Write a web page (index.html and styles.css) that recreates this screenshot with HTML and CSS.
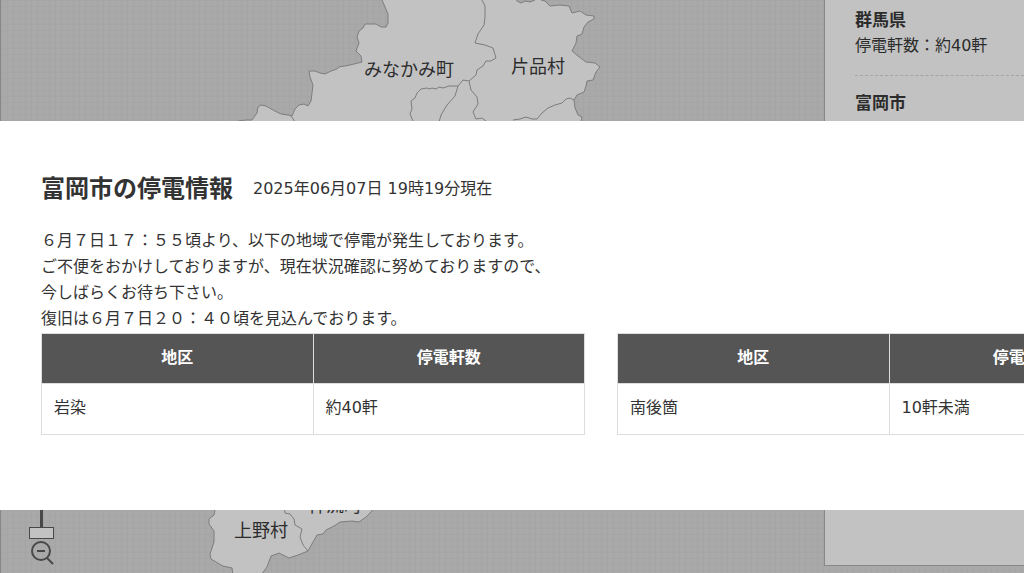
FILE: index.html
```
<!DOCTYPE html>
<html lang="ja">
  <head>
    <meta charset="UTF-8" />
    <meta name="viewport" content="width=device-width, initial-scale=1.0" />
    <title>富岡市の停電情報</title>
    <link rel="stylesheet" href="styles.css">
  </head>
  <body>
    <div class="page">
      <main class="map">
        <svg class="map-canvas" width="824" height="573" viewBox="0 0 824 573" role="img" aria-label="群馬県の地図">
          <g class="area">
            <path d="M238 121L246 120L252 120L257 113L258 107L261 105L266 106L273 110L281 114L288 115L292 116L295 109L299 105L304 104L308 106L311 101L312 93L313 85L310 77L309 71L315 71L320 73L325 74L331 71L337 69L339 67L350 65L362 62L361 56L356 51L359 43L357 37L359 31L363 28L365 24L376 24L381 27L386 27L388 23L388 14L385 7L382 0V-4H514L517 1L521 3L525 1L530 2L535 0V-4H541V0L545 1L550 6L560 5L569 6L572 13L580 11L586 15L594 16L594 19L588 22L584 27L582 34L577 36L576 43L572 51L578 56L586 62L595 63L600 67L596 72L593 80L587 81L586 86L584 92L577 95L574 100L575 108L578 115L582 117L580 125L238 125Z" />
            <path d="M216 505L214 515L209 519L209 524L214 531L214 542L210 554L211 559L216 562L223 566L232 568L233 575H261L267 567L271 556L279 553L289 558L298 555L308 551L313 542L317 535L323 534L326 530L334 526L340 522L352 521L359 522L366 517L371 512L375 505Z" />
          </g>
          <g class="border">
            <path d="M482 0L485 6L485 17L484 25L478 34L475 43L485 45L493 48L496 58L491 61L486 61L483 66L477 70L476 75L469 81L463 80L458 86L449 86L443 88L439 87L436 89L432 88L429 89L427 88L421 89L417 93L415 98L411 101L412 109L410 114L413 121" />
            <path d="M458 86L455 96L447 105L441 115L439 122" />
            <path d="M469 81L471 90L477 97L478 104L473 112L476 119L482 118L486 121" />
            <path d="M513 120L520 119L526 117L532 119L537 119L542 113L548 108L555 105L562 103L566 99L570 98L574 100" />
            <path d="M291 116L296 123" />
            <path d="M284 505L285 513L290 514L294 519L295 525L302 529L300 537L303 545L308 551" />
          </g>
          <g class="place">
            <text x="364" y="76">みなかみ町</text>
            <text x="511" y="73">片品村</text>
            <text x="234" y="537">上野村</text>
            <text x="308" y="512">神流町</text>
          </g>
          <g class="zoom-control">
            <path d="M41.5 500V527" />
            <rect x="29.5" y="527.5" width="24" height="11" />
            <circle cx="41" cy="551" r="9" />
            <path class="zoom-minus" d="M37 551H45" />
            <path class="zoom-minus" d="M47 558L53 564" />
          </g>
        </svg>
      </main>
      <aside class="summary">
        <section class="summary-item">
          <h2 class="summary-name">群馬県</h2>
          <p>停電軒数：約40軒</p>
        </section>
        <section class="summary-item">
          <h2 class="summary-name">富岡市</h2>
        </section>
      </aside>
    </div>

    <div class="modal" role="dialog" aria-labelledby="modal-title">
      <header class="modal-header">
        <h1 class="modal-title" id="modal-title">富岡市の停電情報</h1>
        <p>2025年06月07日 19時19分現在</p>
      </header>
      <p class="modal-message">
        ６月７日１７：５５頃より、以下の地域で停電が発生しております。<br />
        ご不便をおかけしておりますが、現在状況確認に努めておりますので、<br />
        今しばらくお待ち下さい。<br />
        復旧は６月７日２０：４０頃を見込んでおります。
      </p>
      <div class="tables">
        <table class="table">
          <thead>
            <tr><th scope="col">地区</th><th scope="col">停電軒数</th></tr>
          </thead>
          <tbody>
            <tr><td>岩染</td><td>約40軒</td></tr>
          </tbody>
        </table>
        <table class="table">
          <thead>
            <tr><th scope="col">地区</th><th scope="col">停電軒数</th></tr>
          </thead>
          <tbody>
            <tr><td>南後箇</td><td>10軒未満</td></tr>
          </tbody>
        </table>
      </div>
    </div>
  </body>
</html>
```
FILE: styles.css
```
* {
  box-sizing: border-box;
  margin: 0;
  padding: 0;
}

body {
  color: #333;
  font-family: 'DejaVu Sans', 'Noto Sans CJK JP', sans-serif;
  font-size: 16px;
  line-height: 26px;
  overflow: hidden;
}

.page {
  background-color: #a9a9a9;
  background-image:
    linear-gradient(to right, #a5a5a5 1px, transparent 1px),
    linear-gradient(to bottom, #a6a6a6 1px, transparent 1px);
  background-size: 6px 6px;
  border-left: 1px solid #888;
  display: flex;
  min-height: 100vh;
}

.map {
  flex: 1;
  min-width: 0;
  overflow: hidden;
}

.map-canvas {
  display: block;
  margin-left: -1px;
}

.area {
  fill: #c2c2c2;
  stroke: #7d7d7d;
}

.border {
  fill: none;
  stroke: #7d7d7d;
}

.place {
  fill: #2c2c2c;
  font-size: 18px;
}

.zoom-control {
  fill: none;
  stroke: #484848;
  stroke-width: 3px;
}

.zoom-control rect {
  fill: #c2c2c2;
  stroke-width: 1px;
}

.zoom-control circle,
.zoom-minus {
  stroke-width: 2px;
}

.summary {
  background: #c2c2c2;
  border-bottom: 1px solid #888;
  border-left: 1px solid #888;
  color: #2c2c2c;
  flex: 0 0 200px;
  margin-bottom: 7px;
  padding-left: 30px;
}

.summary-item {
  padding: 7px 0 16px;
}

.summary-item + .summary-item {
  border-top: 1px dashed #a4a4a4;
  padding-top: 14px;
}

.summary-name {
  font-size: 17px;
}

.modal {
  background: #fff;
  left: 0;
  overflow: hidden;
  padding: 48px 0 75px 41px;
  position: absolute;
  right: 0;
  top: 121px;
}

.modal-header {
  align-items: center;
  display: flex;
  gap: 20px;
  margin-bottom: 19px;
}

.modal-title {
  font-size: 24px;
  line-height: 40px;
}

.tables {
  display: flex;
  gap: 32px;
}

.table {
  border-collapse: collapse;
  flex: 0 0 544px;
  margin-top: 1px;
  table-layout: fixed;
  width: 544px;
}

.table th,
.table td {
  border: 1px solid #ddd;
  padding: 11px 12px 12px;
}

.table th {
  background: #555;
  color: #fff;
}

.table td {
  padding-bottom: 13px;
  text-align: left;
}
```
